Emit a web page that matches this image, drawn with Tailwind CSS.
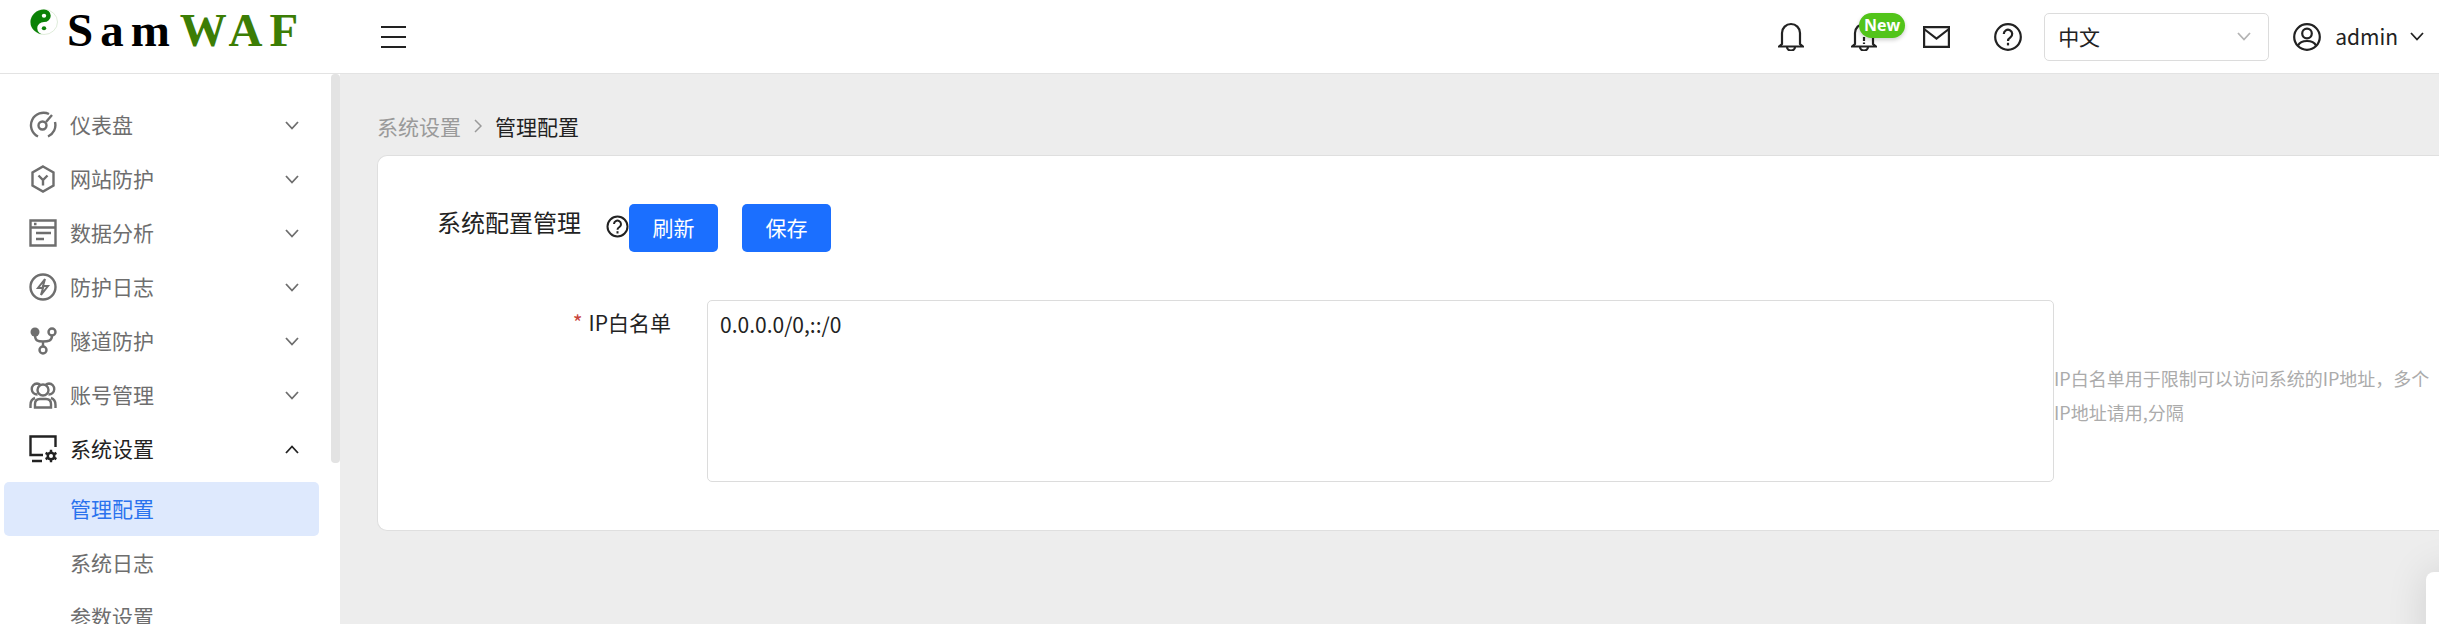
<!DOCTYPE html>
<html lang="zh">
  <head>
    <meta charset="UTF-8" />
    <title>SamWAF</title>
    <script src="https://cdn.jsdelivr.net/npm/@tailwindcss/browser@4"></script>
  </head>
  <body class="h-[624px] w-[2439px] overflow-hidden bg-[#ededed] font-['Noto_Sans_CJK_SC','Noto_Sans',sans-serif] text-[21px] text-[#222] relative">
    <!-- HEADER -->
    <header class="h-[74px] bg-white border-b border-[#e3e3e3] flex items-center">
      <div class="w-[340px] shrink-0 flex items-center">
        <!-- logo -->
        <svg class="ml-[30px] mb-[30px] w-[28px] h-[26px]" viewBox="0 0 28 28" preserveAspectRatio="none">
          <circle cx="14" cy="14" r="13.5" fill="#fff" stroke="#cfe3c8" stroke-width="0.7" />
          <path d="M14 .5A13.5 13.5 0 0 0 14 27.5A6.75 6.75 0 0 1 14 14A6.75 6.75 0 0 0 14 .5z" fill="#0b8207" />
          <circle cx="14" cy="7.2" r="2.2" fill="#fff" />
          <circle cx="14" cy="20.8" r="2.2" fill="#0b8207" />
        </svg>
        <div class="ml-[9px] mb-[13px] font-['Liberation_Serif',serif] font-bold text-[47px] leading-none tracking-[7px] whitespace-nowrap">
          <span class="text-black">Sam</span><span class="ml-[3px] text-[#3c7d05]">WAF</span>
        </div>
      </div>
      <div class="ml-[41px] flex flex-col gap-[8px]">
        <span class="block w-[25px] h-[2px] bg-[#222]"></span>
        <span class="block w-[25px] h-[2px] bg-[#222]"></span>
        <span class="block w-[25px] h-[2px] bg-[#222]"></span>
      </div>
      <div class="ml-auto flex items-center pr-[15px] h-full">
        <!-- bell -->
        <svg class="w-[26px] h-[29px]" viewBox="0 0 26 29" fill="none" stroke="#222" stroke-width="2.2">
          <path d="M4 22V11a9 9 0 0 1 18 0v11l3 2.500H1zM9 25a4 3.500 0 0 0 8 0" />
        </svg>
        <!-- bell with badge -->
        <div class="relative ml-[47px] w-[26px] h-[29px]">
          <svg class="w-[26px] h-[29px]" viewBox="0 0 26 29" fill="none" stroke="#222" stroke-width="2.2">
            <path d="M4 22V11a9 9 0 0 1 18 0v11l3 2.500H1zM9 25a4 3.500 0 0 0 8 0" />
            <path d="M13 15v4M13 20.500v1.500" />
          </svg>
          <span class="absolute left-[8px] top-[-9px] w-[46px] h-[25px] rounded-[13px] bg-[#52c41a] text-white text-[16px] font-bold leading-[24px] text-center shadow-[0_2px_4px_rgba(0,0,0,0.2)] font-['Open_Sans',sans-serif]">New</span>
        </div>
        <!-- mail -->
        <svg class="ml-[46px] w-[27px] h-[22px]" viewBox="0 0 27 22" fill="none" stroke="#222" stroke-width="2.2">
          <path d="M1.100 1.100h24.800v19.800H1.100zM1.100 3l12.400 9.500L25.900 3" />
        </svg>
        <!-- help -->
        <svg class="ml-[44px] w-[28px] h-[28px]" viewBox="0 0 28 28" fill="none" stroke="#222" stroke-width="2.2">
          <circle cx="14" cy="14" r="12.800" />
          <path d="M9.800 11a4.200 4.200 0 1 1 6.600 3.400c-1.500 1-2.400 1.600-2.400 3.600" />
          <path d="M14 19.800v2.600" />
        </svg>
        <!-- language select -->
        <div class="ml-[22px] w-[225px] h-[48px] bg-white border border-[#dcdcdc] rounded-[5px] flex items-center pl-[13px] pr-[17px]">
          <span>中文</span>
          <svg class="ml-auto w-[14px] h-[9px]" viewBox="0 0 14 9" fill="none" stroke="#b4b4b4" stroke-width="1.800"><path d="M1 1l6 6.500L13 1" /></svg>
        </div>
        <!-- user -->
        <svg class="ml-[24px] w-[28px] h-[28px]" viewBox="0 0 28 28" fill="none" stroke="#222" stroke-width="2.2">
          <circle cx="14" cy="14" r="12.800" />
          <circle cx="14" cy="10.500" r="4.800" />
          <path d="M5 22.500c1.500-3 4.500-4.500 9-4.500s7.500 1.500 9 4.500" />
        </svg>
        <span class="ml-[14px]">admin</span>
        <svg class="ml-[12px] w-[14px] h-[9px]" viewBox="0 0 14 9" fill="none" stroke="#222" stroke-width="1.800"><path d="M1 1l6 6.500L13 1" /></svg>
      </div>
    </header>

    <div class="flex h-[550px]">
      <!-- SIDEBAR -->
      <aside class="w-[340px] shrink-0 bg-white relative overflow-hidden">
        <nav class="pt-[24px] pl-[4px] pr-[21px] text-[#6e6e6e]">
          <a class="h-[54px] flex items-center pl-[25px] pr-[20px]">
            <svg class="w-[28px] h-[28px]" viewBox="0 0 28 28" fill="none" stroke="#6e6e6e" stroke-width="2.400">
              <path d="M9 25.500A12.500 12.500 0 0 1 20 3" /><path d="M19 25.500A12.500 12.500 0 0 0 26 11" />
              <circle cx="13.500" cy="14.500" r="4" /><path d="M17 11l6-7" />
            </svg>
            <span class="ml-[13px]">仪表盘</span>
            <svg class="ml-auto w-[14px] h-[9px]" viewBox="0 0 14 9" fill="none" stroke="#6e6e6e" stroke-width="1.800"><path d="M1 1l6 6.500L13 1" /></svg>
          </a>
          <a class="h-[54px] flex items-center pl-[25px] pr-[20px]">
            <svg class="w-[28px] h-[28px]" viewBox="0 0 28 28" fill="none" stroke="#6e6e6e" stroke-width="2.400">
              <path d="M14 1.500l10.500 6v13l-10.500 6l-10.500-6v-13z" /><path d="M9.500 10.500l4.500 4.500l4.500-4.500M14 15v5.500" />
            </svg>
            <span class="ml-[13px]">网站防护</span>
            <svg class="ml-auto w-[14px] h-[9px]" viewBox="0 0 14 9" fill="none" stroke="#6e6e6e" stroke-width="1.800"><path d="M1 1l6 6.500L13 1" /></svg>
          </a>
          <a class="h-[54px] flex items-center pl-[25px] pr-[20px]">
            <svg class="w-[28px] h-[28px]" viewBox="0 0 28 28" fill="none" stroke="#6e6e6e" stroke-width="2.400">
              <path d="M1.500 1.500h25v25h-25zM1.500 8.500h25M5 5h2.500M7 14h15M7 20h8" />
            </svg>
            <span class="ml-[13px]">数据分析</span>
            <svg class="ml-auto w-[14px] h-[9px]" viewBox="0 0 14 9" fill="none" stroke="#6e6e6e" stroke-width="1.800"><path d="M1 1l6 6.500L13 1" /></svg>
          </a>
          <a class="h-[54px] flex items-center pl-[25px] pr-[20px]">
            <svg class="w-[28px] h-[28px]" viewBox="0 0 28 28" fill="none" stroke="#6e6e6e" stroke-width="2.400">
              <circle cx="14" cy="14" r="12.500" /><path d="M16 6l-7 9h5l-2 7l7-9h-5z" stroke-width="2" />
            </svg>
            <span class="ml-[13px]">防护日志</span>
            <svg class="ml-auto w-[14px] h-[9px]" viewBox="0 0 14 9" fill="none" stroke="#6e6e6e" stroke-width="1.800"><path d="M1 1l6 6.500L13 1" /></svg>
          </a>
          <a class="h-[54px] flex items-center pl-[25px] pr-[20px]">
            <svg class="w-[28px] h-[28px]" viewBox="0 0 28 28" fill="none" stroke="#6e6e6e" stroke-width="2.400">
              <circle cx="6" cy="5" r="4.500" fill="#6e6e6e" stroke="none" /><circle cx="23" cy="5" r="3.500" /><circle cx="14" cy="23" r="3.500" />
              <path d="M6 8c0 6 3 6.500 8 6.500s9-.5 9-6M14 14.500v5" />
            </svg>
            <span class="ml-[13px]">隧道防护</span>
            <svg class="ml-auto w-[14px] h-[9px]" viewBox="0 0 14 9" fill="none" stroke="#6e6e6e" stroke-width="1.800"><path d="M1 1l6 6.500L13 1" /></svg>
          </a>
          <a class="h-[54px] flex items-center pl-[25px] pr-[20px]">
            <svg class="w-[28px] h-[28px]" viewBox="0 0 28 28" fill="none" stroke="#6e6e6e" stroke-width="2.400">
              <path d="M8.500 13.500a5.500 5.500 0 0 1-.5-11c1.500 0 2.500.5 3.500 1.500" /><path d="M19.500 13.500a5.500 5.500 0 0 0 .5-11c-1.500 0-2.500.5-3.500 1.500" />
              <circle cx="14" cy="9" r="5.500" /><path d="M1.500 27v-3c0-3 1.500-6 4.500-7M26.500 27v-3c0-3-1.500-6-4.500-7" /><path d="M6 26.500v-3.500c0-3 2-5 5-5h6c3 0 5 2 5 5v3.500z" />
            </svg>
            <span class="ml-[13px]">账号管理</span>
            <svg class="ml-auto w-[14px] h-[9px]" viewBox="0 0 14 9" fill="none" stroke="#6e6e6e" stroke-width="1.800"><path d="M1 1l6 6.500L13 1" /></svg>
          </a>
          <a class="h-[54px] flex items-center pl-[25px] pr-[20px] text-[#222]">
            <svg class="w-[28px] h-[28px]" viewBox="0 0 28 28" fill="none" stroke="#222" stroke-width="2.400">
              <path d="M14 20H1.500V1.500h25V12M3 26h10" />
              <circle cx="22" cy="21" r="4.500" fill="#222" stroke="none" />
              <path d="M22 14.800v12.400M16.600 17.900l10.800 6.200M16.600 24.100l10.800-6.200" stroke-width="2.400" />
              <circle cx="22" cy="21" r="2" fill="#fff" stroke="none" />
            </svg>
            <span class="ml-[13px]">系统设置</span>
            <svg class="ml-auto w-[14px] h-[9px]" viewBox="0 0 14 9" fill="none" stroke="#222" stroke-width="1.800"><path d="M1 8l6-6.500L13 8" /></svg>
          </a>
          <a class="mt-[6px] h-[54px] flex items-center pl-[66px] bg-[#dee9fd] rounded-[5px] text-[#2a72ee]">管理配置</a>
          <a class="h-[54px] flex items-center pl-[66px]">系统日志</a>
          <a class="h-[54px] flex items-center pl-[66px]">参数设置</a>
        </nav>
        <!-- scrollbar -->
        <div class="absolute right-0 top-0 w-[9px] h-[389px] bg-[#e3e3e3] rounded-[4px]"></div>
      </aside>

      <!-- MAIN -->
      <main class="flex-1 min-w-0 pl-[37px] pt-[36px]">
        <div class="flex items-center h-[32px] mb-[13px] leading-none">
          <span class="text-[#9a9a9a]">系统设置</span>
          <svg class="mx-[13px] w-[8px] h-[14px]" viewBox="0 0 8 14" fill="none" stroke="#9a9a9a" stroke-width="1.500"><path d="M1 1l6 6l-6 6" /></svg>
          <span>管理配置</span>
        </div>
        <section class="h-[376px] bg-white border border-[#dfdfdf] border-r-0 rounded-l-[10px] pl-[59px] pt-[48px]">
          <div class="flex items-start h-[48px]">
            <h2 class="text-[24px] leading-[36px] font-normal">系统配置管理</h2>
            <svg class="ml-[25px] mt-[11px] w-[23px] h-[23px]" viewBox="0 0 23 23" fill="none" stroke="#222" stroke-width="2">
              <circle cx="11.500" cy="11.500" r="10" />
              <path d="M8 9a3.500 3.500 0 1 1 5.500 3c-1.300.9-2 1.200-2 2.800" /><path d="M11.500 16.200v2.300" />
            </svg>
            <button class="w-[89px] h-[48px] bg-[#1b6fff] rounded-[5px] text-white">刷新</button>
            <button class="ml-[24px] w-[89px] h-[48px] bg-[#1b6fff] rounded-[5px] text-white">保存</button>
          </div>
          <div class="mt-[48px] flex items-start">
            <label class="w-[270px] h-[46px] flex items-center justify-end pr-[36px] whitespace-nowrap"><span class="text-[#c9453c] mr-[6px]">*</span>IP白名单</label>
            <div class="w-[1347px] h-[182px] border border-[#dcdcdc] rounded-[5px] px-[12px] py-[8px]">0.0.0.0/0,::/0</div>
            <p class="mt-[61px] w-[382px] text-[18px] leading-[34px] text-[#ababab]">IP白名单用于限制可以访问系统的IP地址，多个IP地址请用,分隔</p>
          </div>
        </section>
      </main>
    </div>

    <!-- floating panel clipped at the corner -->
    <div class="absolute left-[2426px] top-[572px] w-[60px] h-[80px] bg-white rounded-[8px] shadow-[0_0_40px_rgba(0,0,0,0.12)]"></div>
  </body>
</html>
